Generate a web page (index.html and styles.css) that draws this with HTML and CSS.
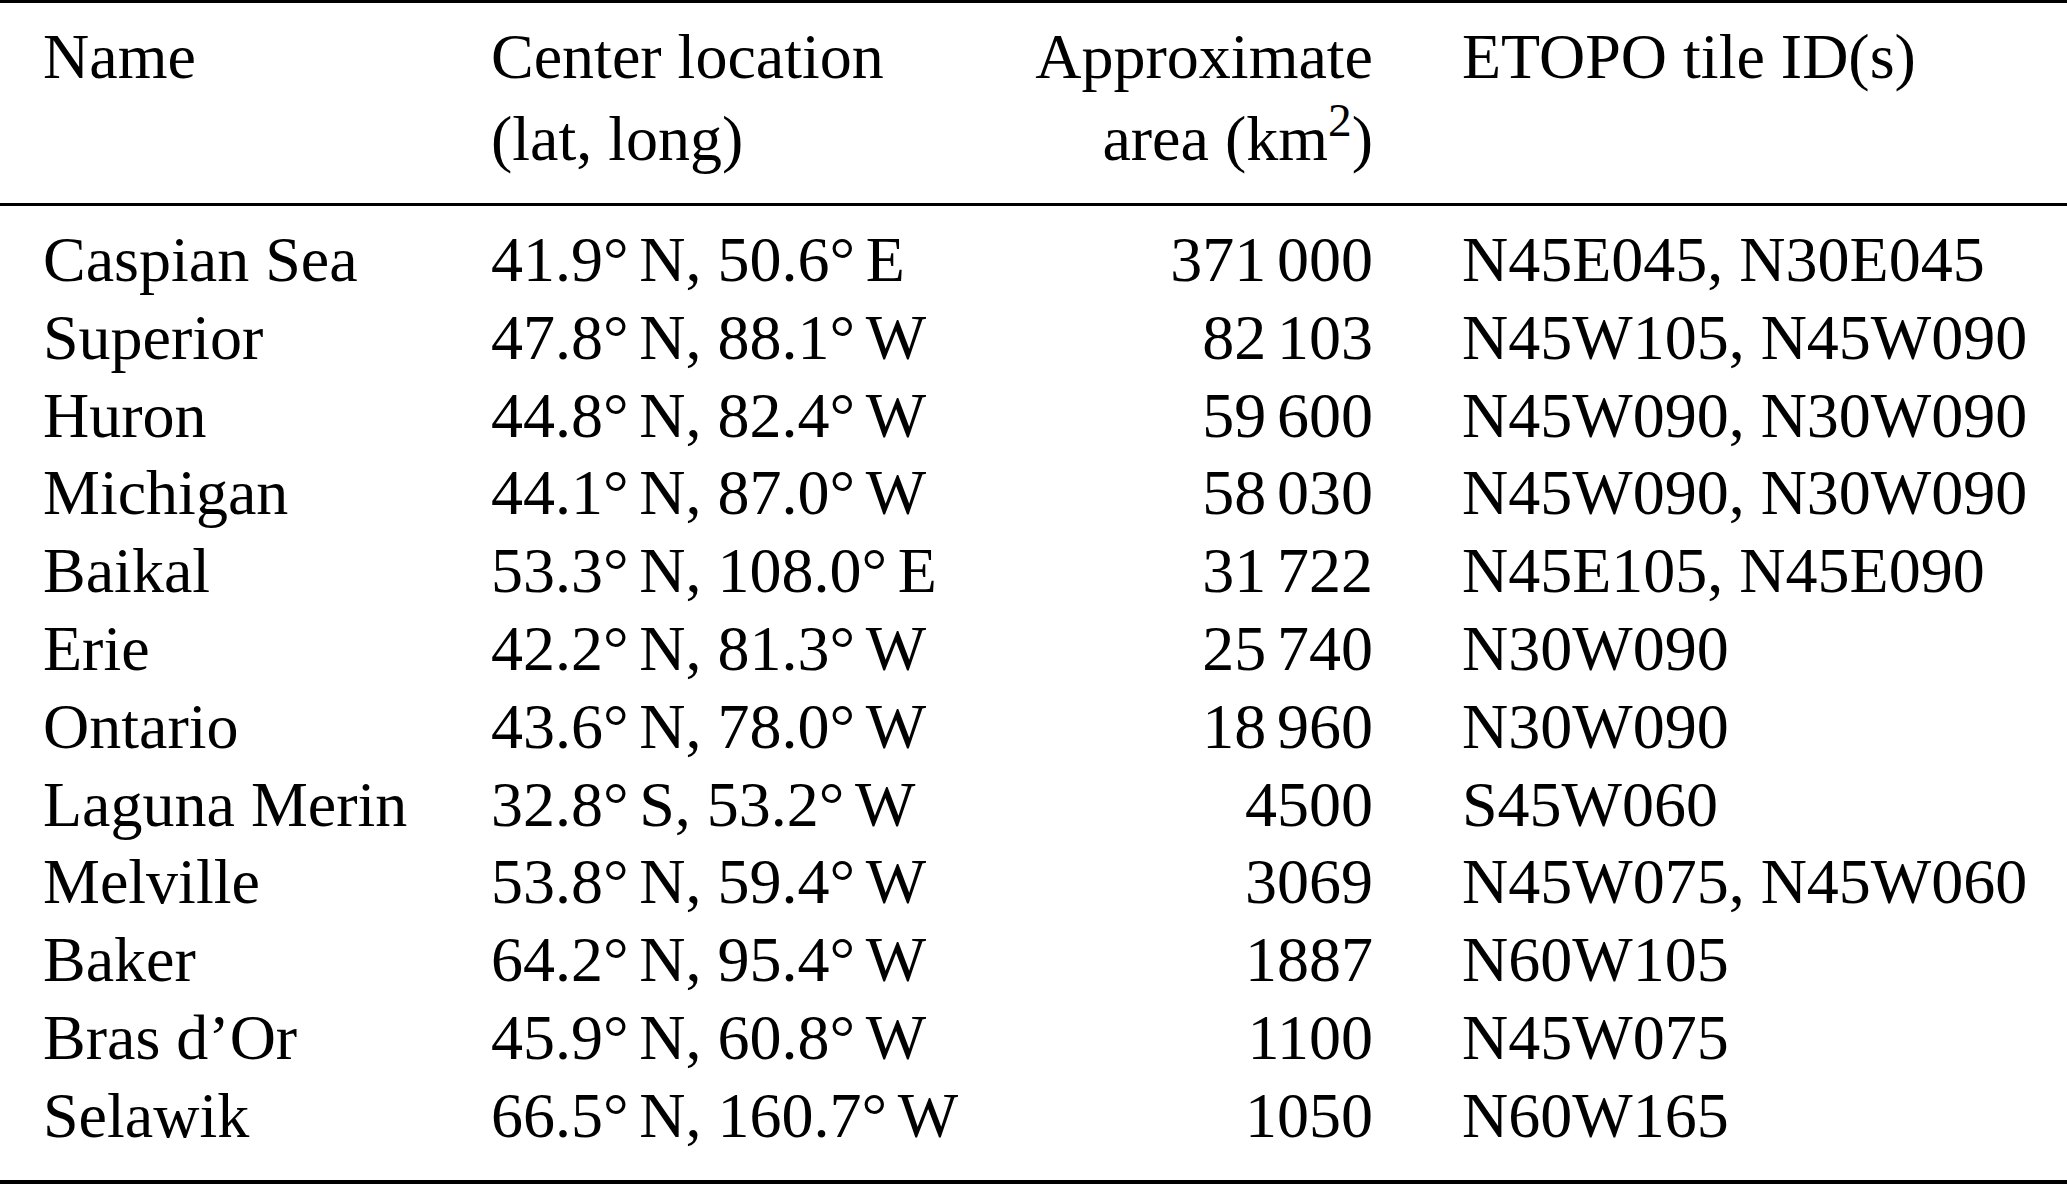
FILE: index.html
```html
<!DOCTYPE html>
<html lang="en">
<head>
<meta charset="utf-8">
<title>Lakes table</title>
<link rel="stylesheet" href="styles.css">
</head>
<body>
<table class="lakes">
  <colgroup>
    <col class="c-name">
    <col class="c-loc">
    <col class="c-area">
    <col class="c-tile">
  </colgroup>
  <thead>
    <tr>
      <th class="name">Name</th>
      <th class="loc">Center location<br>(lat, long)</th>
      <th class="area">Approximate<br>area (km<sup>2</sup>)</th>
      <th class="tile">ETOPO tile ID(s)</th>
    </tr>
  </thead>
  <tbody>
    <tr class="first"><td class="name">Caspian Sea</td><td class="loc">41.9°&#8198;N, 50.6°&#8198;E</td><td class="area">371&#8198;000</td><td class="tile">N45E045, N30E045</td></tr>
    <tr><td class="name">Superior</td><td class="loc">47.8°&#8198;N, 88.1°&#8198;W</td><td class="area">82&#8198;103</td><td class="tile">N45W105, N45W090</td></tr>
    <tr><td class="name">Huron</td><td class="loc">44.8°&#8198;N, 82.4°&#8198;W</td><td class="area">59&#8198;600</td><td class="tile">N45W090, N30W090</td></tr>
    <tr><td class="name">Michigan</td><td class="loc">44.1°&#8198;N, 87.0°&#8198;W</td><td class="area">58&#8198;030</td><td class="tile">N45W090, N30W090</td></tr>
    <tr><td class="name">Baikal</td><td class="loc">53.3°&#8198;N, 108.0°&#8198;E</td><td class="area">31&#8198;722</td><td class="tile">N45E105, N45E090</td></tr>
    <tr><td class="name">Erie</td><td class="loc">42.2°&#8198;N, 81.3°&#8198;W</td><td class="area">25&#8198;740</td><td class="tile">N30W090</td></tr>
    <tr><td class="name">Ontario</td><td class="loc">43.6°&#8198;N, 78.0°&#8198;W</td><td class="area">18&#8198;960</td><td class="tile">N30W090</td></tr>
    <tr><td class="name">Laguna Merin</td><td class="loc">32.8°&#8198;S, 53.2°&#8198;W</td><td class="area">4500</td><td class="tile">S45W060</td></tr>
    <tr><td class="name">Melville</td><td class="loc">53.8°&#8198;N, 59.4°&#8198;W</td><td class="area">3069</td><td class="tile">N45W075, N45W060</td></tr>
    <tr><td class="name">Baker</td><td class="loc">64.2°&#8198;N, 95.4°&#8198;W</td><td class="area">1887</td><td class="tile">N60W105</td></tr>
    <tr><td class="name">Bras d’Or</td><td class="loc">45.9°&#8198;N, 60.8°&#8198;W</td><td class="area">1100</td><td class="tile">N45W075</td></tr>
    <tr class="last"><td class="name">Selawik</td><td class="loc">66.5°&#8198;N, 160.7°&#8198;W</td><td class="area">1050</td><td class="tile">N60W165</td></tr>
  </tbody>
</table>
</body>
</html>
```
FILE: styles.css
```css
html, body {
  margin: 0;
  padding: 0;
  background: #ffffff;
}

body {
  font-family: "Liberation Serif", "Times New Roman", serif;
  font-size: 64px;
  color: #000000;
}

.lakes {
  width: 2067px;
  border-collapse: collapse;
  table-layout: fixed;
  border-top: 3px solid #000;
  border-bottom: 4px solid #000;
}

.c-name { width: 491px; }
.c-loc  { width: 509px; }
.c-area { width: 373px; }
.c-tile { width: 694px; }

.lakes th,
.lakes td {
  padding: 0;
  font-weight: normal;
  vertical-align: top;
  white-space: nowrap;
}

.lakes thead th {
  line-height: 81.5px;
  padding-top: 13px;
  padding-bottom: 24px;
  border-bottom: 3px solid #000;
}

.lakes tbody td {
  line-height: 77.8px;
}

.lakes tbody tr.first td { padding-top: 15px; }
.lakes tbody tr.last td { padding-bottom: 25px; }

.name { text-align: left; padding-left: 43px !important; }
.loc  { text-align: left; }
.area { text-align: right; }
.tile { text-align: left; padding-left: 89px !important; }

sup {
  font-size: 0.74em;
  line-height: 0;
  vertical-align: 0.5em;
}
```
